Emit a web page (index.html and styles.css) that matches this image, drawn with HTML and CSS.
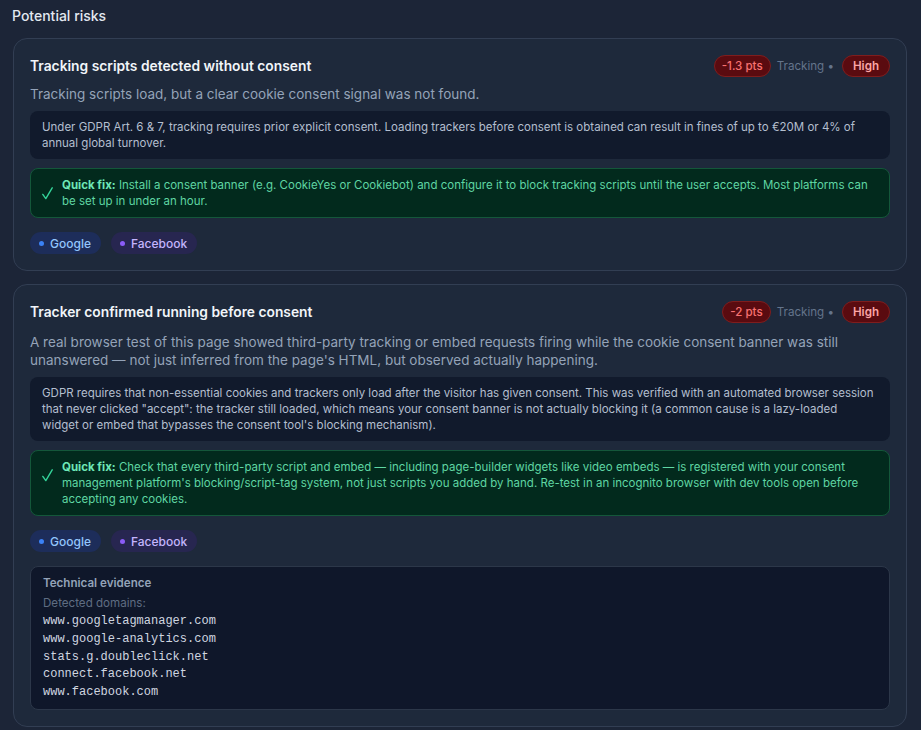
FILE: index.html
```html
<!DOCTYPE html>
<html>
<head>
<meta charset="utf-8">
<link rel="stylesheet" href="styles.css">
</head>
<body>
<div class="page">
  <h2 class="section-title">Potential risks</h2>

  <div class="card">
    <div class="card-head">
      <h3 class="card-title">Tracking scripts detected without consent</h3>
      <div class="meta">
        <span class="pill pts">-1.3 pts</span>
        <span class="cat">Tracking •</span>
        <span class="pill sev">High</span>
      </div>
    </div>
    <p class="desc">Tracking scripts load, but a clear cookie consent signal was not found.</p>
    <div class="legal">Under GDPR Art. 6 &amp; 7, tracking requires prior explicit consent. Loading trackers before consent is obtained can result in fines of up to €20M or 4% of annual global turnover.</div>
    <div class="fix">
      <svg class="check" width="11" height="13" viewBox="0 0 11 13"><path d="M0.8 7.4 L3.8 11.6 L10.2 0.8" fill="none" stroke="#34d399" stroke-width="1.4" stroke-linecap="round" stroke-linejoin="round"/></svg>
      <p><b>Quick fix:</b> Install a consent banner (e.g. CookieYes or Cookiebot) and configure it to block tracking scripts until the user accepts. Most platforms can be set up in under an hour.</p>
    </div>
    <div class="tags">
      <span class="tag google"><i class="dot"></i>Google</span>
      <span class="tag facebook"><i class="dot"></i>Facebook</span>
    </div>
  </div>

  <div class="card">
    <div class="card-head">
      <h3 class="card-title">Tracker confirmed running before consent</h3>
      <div class="meta">
        <span class="pill pts">-2 pts</span>
        <span class="cat">Tracking •</span>
        <span class="pill sev">High</span>
      </div>
    </div>
    <p class="desc desc-lg">A real browser test of this page showed third-party tracking or embed requests firing while the cookie consent banner was still unanswered — not just inferred from the page's HTML, but observed actually happening.</p>
    <div class="legal">GDPR requires that non-essential cookies and trackers only load after the visitor has given consent. This was verified with an automated browser session that never clicked "accept": the tracker still loaded, which means your consent banner is not actually blocking it (a common cause is a lazy-loaded widget or embed that bypasses the consent tool's blocking mechanism).</div>
    <div class="fix">
      <svg class="check" width="11" height="13" viewBox="0 0 11 13"><path d="M0.8 7.4 L3.8 11.6 L10.2 0.8" fill="none" stroke="#34d399" stroke-width="1.4" stroke-linecap="round" stroke-linejoin="round"/></svg>
      <p><b>Quick fix:</b> Check that every third-party script and embed — including page-builder widgets like video embeds — is registered with your consent management platform's blocking/script-tag system, not just scripts you added by hand. Re-test in an incognito browser with dev tools open before accepting any cookies.</p>
    </div>
    <div class="tags">
      <span class="tag google"><i class="dot"></i>Google</span>
      <span class="tag facebook"><i class="dot"></i>Facebook</span>
    </div>
    <div class="evidence">
      <div class="ev-title">Technical evidence</div>
      <div class="ev-label">Detected domains:</div>
      <div class="ev-list">
        <div>www.googletagmanager.com</div>
        <div>www.google-analytics.com</div>
        <div>stats.g.doubleclick.net</div>
        <div>connect.facebook.net</div>
        <div>www.facebook.com</div>
      </div>
    </div>
  </div>
</div>
</body>
</html>
```

FILE: styles.css
```css
* { box-sizing: border-box; }
html, body {
  margin: 0;
  background: #1c2537;
}
body {
  font-family: Inter, "Noto Sans", "Liberation Sans", sans-serif;
  color: #e2e8f0;
}
.page {
  padding: 7px 14px 0 13px;
  display: flex;
  flex-direction: column;
}
.section-title {
  margin: 0 0 13px -1px;
  font-size: 14px;
  line-height: 18px;
  font-weight: 500;
  color: #e2e8f0;
}
.card {
  border: 1px solid #323e53;
  border-radius: 14px;
  background: #1e293b;
  padding: 16px 16px 16px;
  margin-bottom: 13px;
  display: flex;
  flex-direction: column;
}
.card-head {
  display: flex;
  justify-content: space-between;
  align-items: center;
  height: 22px;
  flex: none;
}
.card-title {
  margin: 0;
  font-size: 13.8px;
  font-weight: 600;
  color: #f1f5f9;
}
.meta {
  display: flex;
  align-items: center;
  gap: 6px;
}
.pill {
  display: inline-flex;
  align-items: center;
  height: 22px;
  padding: 0 7px;
  border-radius: 11px;
  font-size: 11.6px;
  background: #5a0b10;
  border: 1px solid #7f1d1d;
}
.pts { color: #f87171; font-weight: 500; }
.sev { color: #fca5a5; font-weight: 600; padding: 0 10px; }
.cat {
  font-size: 11.6px;
  color: #64748b;
  margin-right: 2px;
}
.desc {
  margin: 8px 0 0;
  font-size: 13.5px;
  line-height: 18px;
  color: #94a3b8;
}
.desc-lg { margin-top: 10px; }
.legal {
  flex: none;
  margin-top: 8px;
  background: #111a2c;
  border-radius: 8px;
  padding: 8px 16px 8px 12px;
  font-size: 11.5px;
  line-height: 16px;
  color: #b4bfcf;
}
.fix {
  flex: none;
  margin-top: 9px;
  display: flex;
  align-items: flex-start;
  gap: 9px;
  background: #022a1d;
  border: 1px solid #14573a;
  border-radius: 8px;
  padding: 8px 11px 8px 11px;
}
.check {
  flex: none;
  margin-top: 10px;
}
.fix p {
  margin: 0;
  font-size: 11.5px;
  line-height: 16px;
  color: #5fd6a3;
}
.fix b { font-weight: 700; color: #6ee7b7; }
.tags {
  flex: none;
  margin-top: 14px;
  display: flex;
  gap: 10px;
}
.tag {
  display: inline-flex;
  align-items: center;
  gap: 6px;
  height: 22px;
  padding: 0 10px 0 9px;
  border-radius: 11px;
  font-size: 12px;
  font-weight: 500;
}
.dot {
  width: 5px;
  height: 5px;
  border-radius: 50%;
  display: inline-block;
}
.google { background: #1d2d5a; color: #93c5fd; }
.google .dot { background: #3b82f6; }
.facebook { background: #272650; color: #c4b5fd; }
.facebook .dot { background: #8b5cf6; }
.evidence {
  flex: none;
  margin-top: 14px;
  background: #0f172a;
  border: 1px solid #2c3749;
  border-radius: 8px;
  padding: 8px 12px 7px;
}
.ev-title {
  font-size: 11.6px;
  line-height: 16px;
  font-weight: 600;
  color: #94a3b8;
}
.ev-label {
  margin-top: 4px;
  font-size: 11.6px;
  line-height: 16px;
  color: #5f6d82;
}
.ev-list {
  margin-top: 2px;
  font-family: "Liberation Mono", "DejaVu Sans Mono", monospace;
  font-size: 12px;
  line-height: 17.8px;
  color: #cfd6e0;
}
```
